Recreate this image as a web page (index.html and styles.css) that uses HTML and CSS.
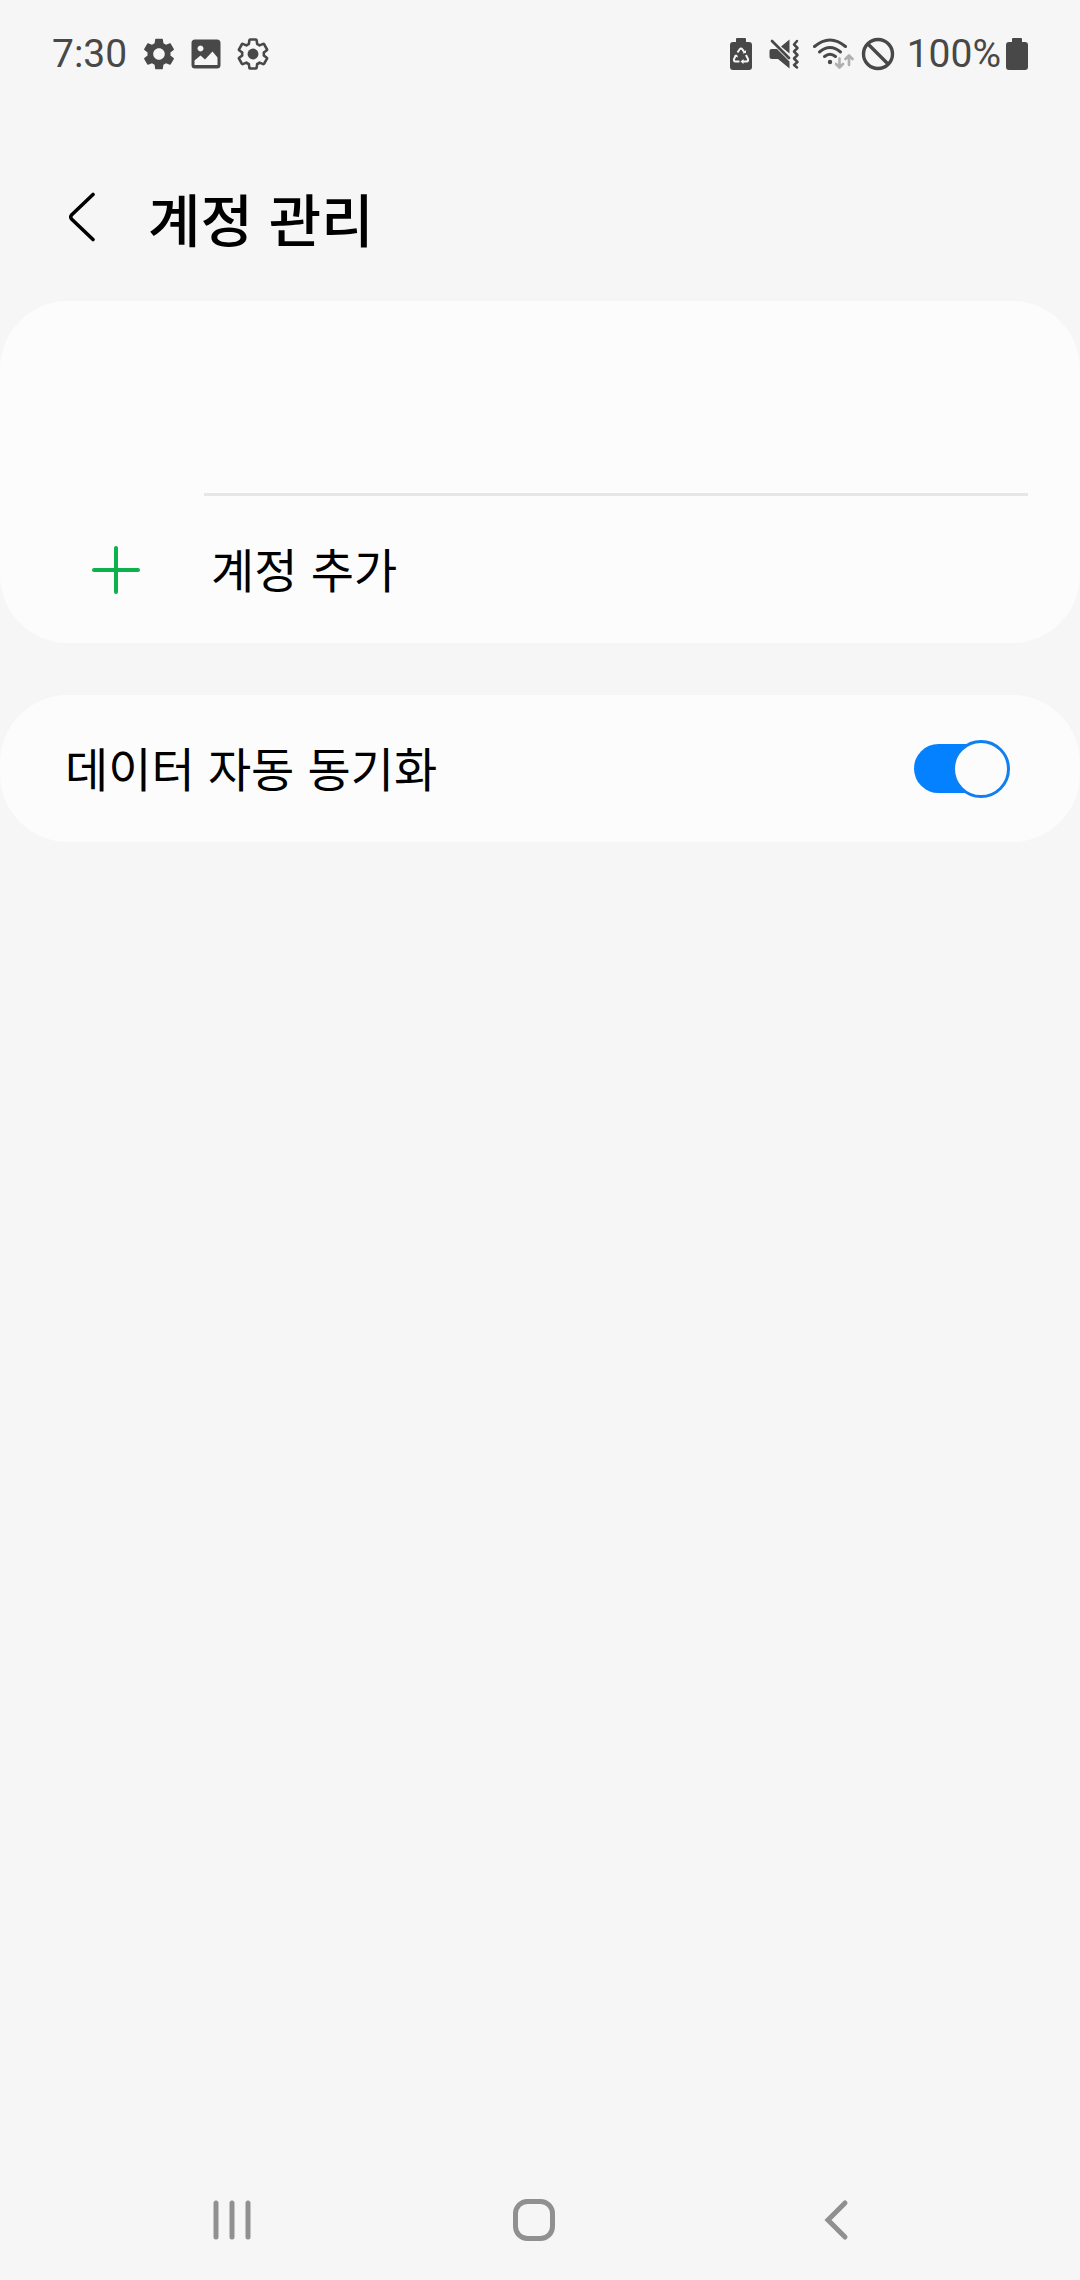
FILE: index.html
```html
<!DOCTYPE html>
<html lang="ko">
<head>
  <meta charset="utf-8">
  <meta name="viewport" content="width=device-width, initial-scale=1">
  <title>계정 관리</title>
  <link rel="stylesheet" href="styles.css">
</head>
<body>
  <div class="status-bar">
    <div class="status-left">
      <time class="clock">7:30</time>
      <svg class="icon" width="32" height="32" viewBox="2 2 20 20" aria-hidden="true">
        <path fill="currentColor" d="M19.14 12.94c.04-.3.06-.61.06-.94 0-.32-.02-.64-.07-.94l2.03-1.58c.18-.14.23-.41.12-.61l-1.92-3.32c-.12-.22-.37-.29-.59-.22l-2.39.96c-.5-.38-1.03-.7-1.62-.94L14.4 2.81c-.04-.24-.24-.41-.48-.41h-3.84c-.24 0-.43.17-.47.41l-.36 2.54c-.59.24-1.13.57-1.62.94l-2.39-.96c-.22-.08-.47 0-.59.22L2.74 8.87c-.12.21-.08.47.12.61l2.03 1.58c-.05.3-.09.63-.09.94s.02.64.07.94l-2.03 1.58c-.18.14-.23.41-.12.61l1.92 3.32c.12.22.37.29.59.22l2.39-.96c.5.38 1.03.7 1.62.94l.36 2.54c.05.24.24.41.48.41h3.84c.24 0 .44-.17.47-.41l.36-2.54c.59-.24 1.13-.56 1.62-.94l2.39.96c.22.08.47 0 .59-.22l1.92-3.32c.12-.22.07-.47-.12-.61l-2.01-1.58zM12 15.6c-1.98 0-3.6-1.62-3.6-3.6s1.62-3.6 3.6-3.6 3.6 1.62 3.6 3.6-1.62 3.6-3.6 3.6z"/>
      </svg>
      <svg class="icon" width="30" height="30" viewBox="0 0 30 30" aria-hidden="true">
        <path fill="currentColor" fill-rule="evenodd" d="M4 0.500H26Q29.500 0.500 29.500 4V26Q29.500 29.500 26 29.500H4Q0.500 29.500 0.500 26V4Q0.500 0.500 4 0.500ZM9.500 6.500a3 3 0 1 0 .01 0ZM3.500 21.500V26H26.500V18.500L21.500 12.500L14 20.500L9.500 16.500Z"/>
      </svg>
      <svg class="icon" width="32" height="32" viewBox="1.400 1.400 21.200 21.200" aria-hidden="true">
        <path fill="none" stroke="currentColor" stroke-width="1.700" stroke-linejoin="round" d="M19.140 12.940c.04-.3.06-.61.06-.94 0-.32-.02-.64-.07-.94l2.030-1.580c.18-.14.23-.41.12-.61l-1.920-3.320c-.12-.22-.37-.29-.59-.22l-2.390.96c-.5-.38-1.030-.7-1.620-.94L14.400 2.810c-.04-.24-.24-.41-.48-.41h-3.840c-.24 0-.43.17-.47.41l-.36 2.540c-.59.24-1.130.57-1.620.94l-2.390-.96c-.22-.08-.47 0-.59.22L2.740 8.870c-.12.21-.08.47.12.61l2.030 1.580c-.05.3-.09.63-.09.94s.02.64.07.94l-2.030 1.580c-.18.14-.23.41-.12.61l1.920 3.320c.12.22.37.29.59.22l2.390-.96c.5.38 1.030.7 1.620.94l.36 2.540c.05.24.24.41.48.41h3.840c.24 0 .44-.17.47-.41l.36-2.540c.59-.24 1.130-.56 1.620-.94l2.390.96c.22.08.47 0 .59-.22l1.920-3.320c.12-.22.07-.47-.12-.61z"/>
        <circle cx="12" cy="12" r="3.600" fill="currentColor"/>
      </svg>
    </div>
    <div class="status-right">
      <svg class="icon" width="32" height="32" viewBox="0 0 32 32" aria-hidden="true">
        <path fill="currentColor" d="M7 0h8q1 0 1 1v3h3q3 0 3 3v22q0 3-3 3H3q-3 0-3-3V7q0-3 3-3h3V1q0-1 1-1z"/>
        <g fill="none" stroke="#f6f6f6" stroke-width="2">
          <path d="M7.500 14.500 9.500 11.500q1.500-2 3 0l2 3"/>
          <path d="M16 17l2 4q.500 2.500-1.500 2.500h-4"/>
          <path d="M9.500 23.500H5.500Q3.500 23.500 4 21l2-4"/>
        </g>
        <path fill="#f6f6f6" d="M12.500 15.500l3.500-.500V12zM13.500 21v5l-3-2.500zM4 18l3-1.500 1 3z"/>
      </svg>
      <svg class="icon" width="36" height="32" viewBox="0 0 36 32" aria-hidden="true">
        <path fill="currentColor" d="M12 8.500 20.500 1.500V15.500zM2.500 11H8L20.500 23.500V30.500L9 21H3Q.500 21 .500 18.500V13Q.500 11 2.500 11z"/>
        <path fill="none" stroke="currentColor" stroke-width="2.600" stroke-linecap="round" d="M3 3 20 20"/>
        <path fill="none" stroke="currentColor" stroke-width="2.500" stroke-linecap="round" stroke-linejoin="round" d="M28 3 25 6.500l3.500 3.500-3.500 3.500 3.500 3.500-3.500 3.500 3.500 3.500-3.500 3 3 2.500"/>
      </svg>
      <svg class="icon" width="42" height="32" viewBox="0 0 42 32" aria-hidden="true">
        <g fill="none" stroke="currentColor" stroke-width="3" stroke-linecap="round">
          <path d="M2.500 8.500Q18-4.500 33.500 8.500"/>
          <path d="M7.500 14Q18 5 28.500 14"/>
          <path d="M12.500 18.500Q18 14 23.500 18.500"/>
        </g>
        <circle cx="18" cy="24" r="2.200" fill="currentColor"/>
        <path fill="none" stroke="#b0b0b0" stroke-width="2.600" stroke-linecap="round" stroke-linejoin="round" d="M27.500 20.500V29M24 26l3.500 3.500 3.500-3.500M37 27V18M33.500 21l3.500-3.500 3.500 3.500"/>
      </svg>
      <svg class="icon" width="34" height="34" viewBox="0 0 34 34" aria-hidden="true">
        <g fill="none" stroke="currentColor" stroke-width="3.400">
          <circle cx="17" cy="17" r="14.500"/>
          <path d="M7 7 27 27"/>
        </g>
      </svg>
      <span class="battery">
        <span>100%</span>
        <svg class="icon" width="22" height="32" viewBox="0 0 22 32" aria-hidden="true">
          <path fill="currentColor" d="M7 0h8q1 0 1 1v3h3q3 0 3 3v22q0 3-3 3H3q-3 0-3-3V7q0-3 3-3h3V1q0-1 1-1z"/>
        </svg>
      </span>
    </div>
  </div>

  <header class="header">
    <button class="icon-button" type="button" aria-label="뒤로">
      <svg width="28" height="52" viewBox="0 0 28 52" aria-hidden="true">
        <path fill="none" stroke="currentColor" stroke-width="3.600" stroke-linecap="round" stroke-linejoin="round" d="M25 3.500 3.500 24Q2 26 3.500 28L25 48.500"/>
      </svg>
    </button>
    <h1 class="title">계정 관리</h1>
  </header>

  <main class="content">
    <section class="card" aria-label="계정">
      <div class="account-slot"></div>
      <hr class="divider">
      <button class="row add-row" type="button">
        <svg width="48" height="48" viewBox="0 0 48 48" aria-hidden="true">
          <path fill="none" stroke="currentColor" stroke-width="4" stroke-linecap="round" d="M24 2V46M2 24H46"/>
        </svg>
        <span class="row-label">계정 추가</span>
      </button>
    </section>
    <section class="card" aria-label="동기화">
      <label class="row sync-row">
        <span class="row-label">데이터 자동 동기화</span>
        <input class="switch" type="checkbox" role="switch" checked>
      </label>
    </section>
  </main>

  <nav class="nav-bar" aria-label="시스템 탐색">
    <button class="icon-button" type="button" aria-label="최근 앱">
      <svg width="44" height="44" viewBox="0 0 44 44" aria-hidden="true">
        <path fill="none" stroke="currentColor" stroke-width="5" stroke-linecap="round" d="M6 5V39M22 5V39M38 5V39"/>
      </svg>
    </button>
    <button class="icon-button" type="button" aria-label="홈">
      <svg width="44" height="44" viewBox="0 0 44 44" aria-hidden="true">
        <rect x="3.500" y="3.500" width="37" height="37" rx="12" fill="none" stroke="currentColor" stroke-width="5"/>
      </svg>
    </button>
    <button class="icon-button" type="button" aria-label="뒤로 가기">
      <svg width="44" height="44" viewBox="0 0 44 44" aria-hidden="true">
        <path fill="none" stroke="currentColor" stroke-width="5" stroke-linecap="round" d="M31 5 14 22 31 39"/>
      </svg>
    </button>
  </nav>
</body>
</html>
```
FILE: styles.css
```css
*,
*::before,
*::after {
  box-sizing: border-box;
}

body {
  margin: 0;
  min-height: 100vh;
  display: flex;
  flex-direction: column;
  background: #f6f6f6;
  color: #000;
  font-family: "Noto Sans CJK KR", sans-serif;
  font-size: 47px;
}

button {
  padding: 0;
  border: 0;
  background: none;
  color: inherit;
  font: inherit;
  text-align: left;
  cursor: pointer;
}

svg {
  display: block;
  flex: none;
}

/* Status bar */
.status-bar {
  display: flex;
  align-items: center;
  justify-content: space-between;
  padding: 32px 52px;
  color: #484848;
  font-family: Roboto, sans-serif;
  font-size: 39px;
  line-height: 44px;
}

.status-left,
.status-right,
.battery {
  display: flex;
  align-items: center;
}

.status-left {
  gap: 16px;
}

.status-right {
  gap: 7px;
}

.battery {
  gap: 5px;
  padding-left: 5px;
}

/* Header */
.header {
  display: flex;
  align-items: center;
  gap: 52px;
  padding: 53px 68px 28px;
}

.title {
  margin: 0;
  font-size: 57px;
  font-weight: 500;
  line-height: 112px;
}

.icon-button {
  display: grid;
  place-items: center;
}

/* Settings cards */
.content {
  flex: 1;
  display: flex;
  flex-direction: column;
  gap: 52px;
}

.card {
  border-radius: 68px;
  background: #fcfcfc;
}

.account-slot {
  min-height: 192px;
}

.divider {
  height: 3px;
  margin: 0 52px 0 204px;
  border: 0;
  background: #e6e6e6;
}

.row {
  display: flex;
  align-items: center;
  width: 100%;
  min-height: 147px;
  line-height: 72px;
}

.row-label {
  padding-bottom: 4px;
  color: #000;
}

.add-row {
  gap: 71px;
  padding: 0 92px;
  color: #0cb14b;
}

.sync-row {
  justify-content: space-between;
  padding: 0 70px 0 65px;
}

.switch {
  appearance: none;
  flex: none;
  display: grid;
  align-items: center;
  width: 96px;
  height: 58px;
  margin: 0;
}

.switch::before,
.switch::after {
  content: "";
  grid-area: 1 / 1;
  border-radius: 29px;
}

.switch::before {
  height: 49px;
  margin-right: 4px;
  background: #bdbdbd;
}

.switch::after {
  width: 58px;
  height: 58px;
  border: 3px solid #bdbdbd;
  background: #fcfcfc;
}

.switch:checked::before {
  background: #0381fe;
}

.switch:checked::after {
  justify-self: end;
  border-color: #0f80f0;
}

/* System navigation */
.nav-bar {
  display: grid;
  grid-template-columns: repeat(3, 1fr);
  height: 120px;
  padding: 0 93px 0 81px;
  color: #909090;
}
```
